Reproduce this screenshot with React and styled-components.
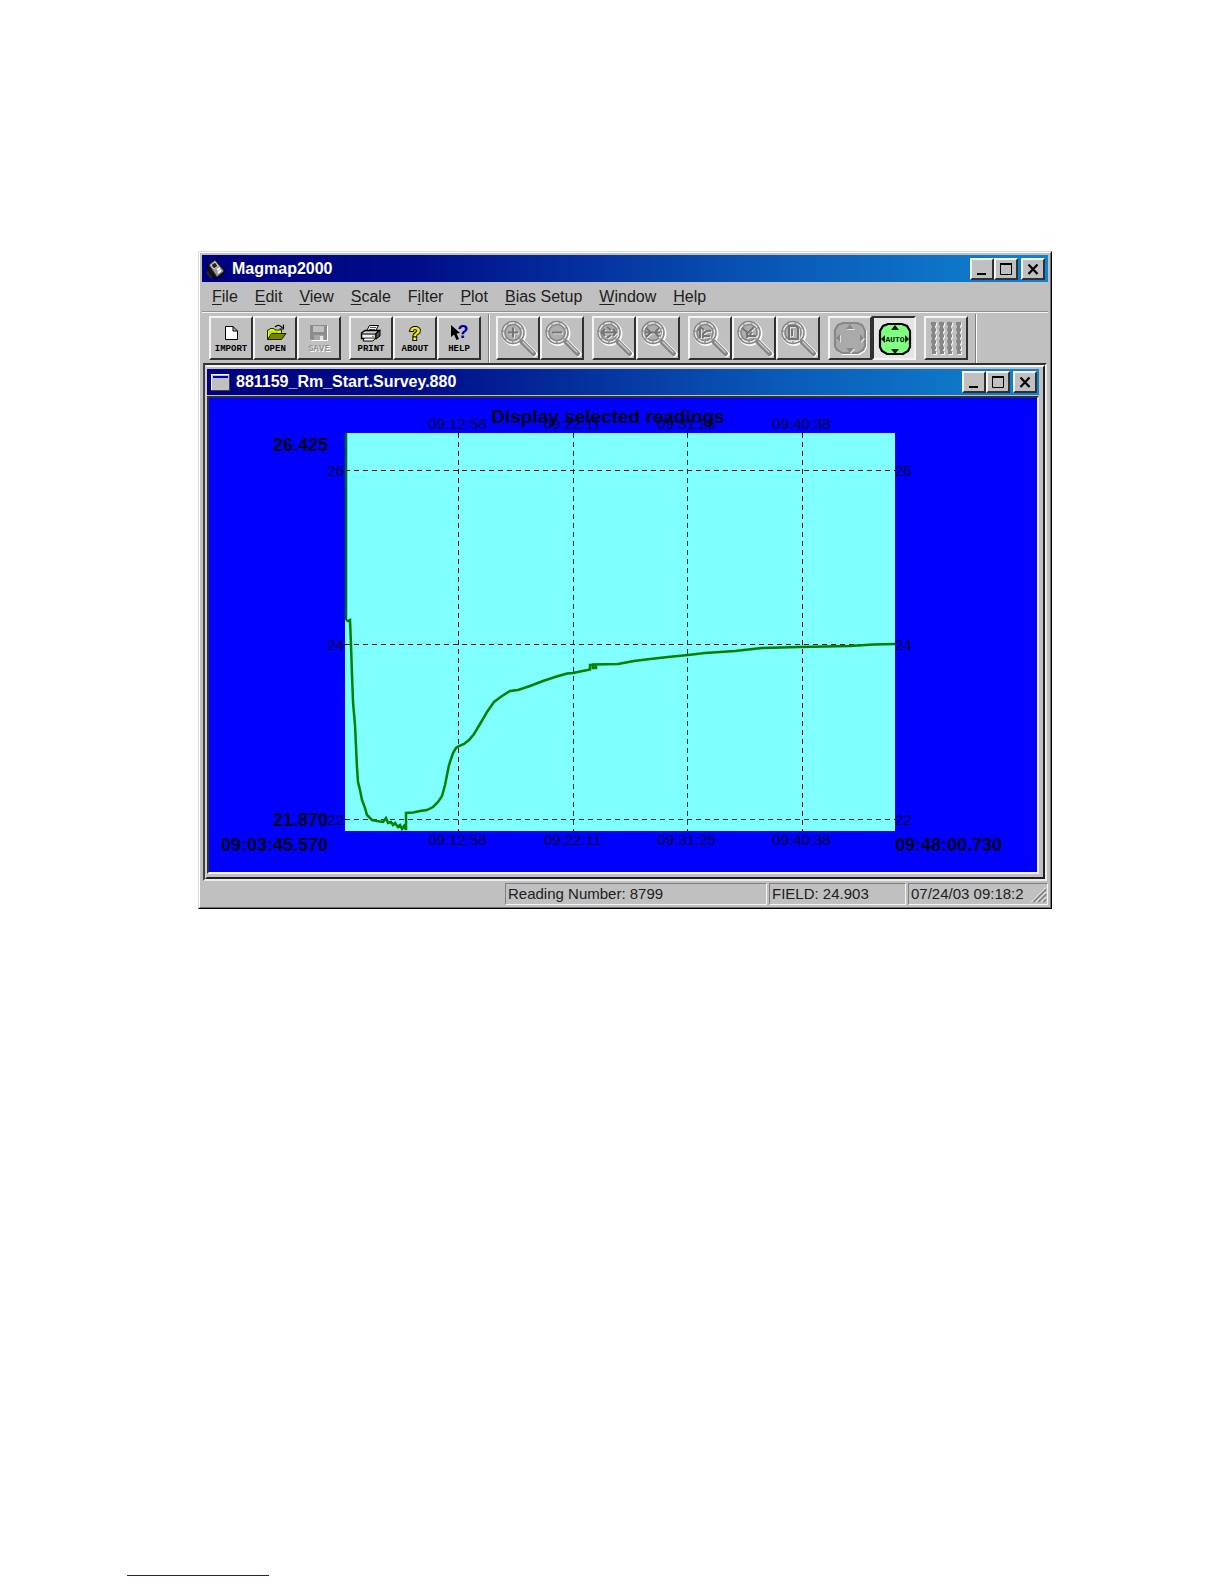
import React from "react";
import styled, { createGlobalStyle, css } from "styled-components";

const GlobalStyle = createGlobalStyle`
  *, *::before, *::after { box-sizing: border-box; }
  body {
    margin: 0;
    background: #fff;
    color: #000;
    font-family: "Liberation Sans", Arial, sans-serif;
  }
`;

const silver = "#c0c0c0";

const raised = css`
  border-style: solid;
  border-width: 2px;
  border-color: #f4f4f4 #303030 #303030 #f4f4f4;
`;

const Page = styled.main`
  display: flex;
  flex-direction: column;
  justify-content: space-between;
  min-height: 100vh;
  padding: 251px 172px 8px 198px;
`;

const Frame = styled.section`
  border: 1px solid;
  border-color: #dcdcdc #000 #000 #dcdcdc;
  background: ${silver};
`;

const FrameInner = styled.div`
  border: 1px solid;
  border-color: #fff #707070 #707070 #fff;
  padding: 2px;
`;

const TitleBar = styled.header`
  display: flex;
  align-items: center;
  gap: 6px;
  height: ${(p) => (p.$child ? 26 : 27)}px;
  padding: 0 ${(p) => (p.$child ? 2 : 3)}px 0 4px;
  background: linear-gradient(90deg, #000080 0%, #000d88 25%, #0a5cb8 70%, #1084d0 100%);
`;

const Title = styled.h1`
  flex: 1;
  margin: 0;
  color: #fff;
  font-size: 16px;
  line-height: 24px;
  font-weight: 700;
  white-space: nowrap;
`;

const Captions = styled.div`
  display: flex;
`;

const Caption = styled.button`
  ${raised}
  display: grid;
  place-items: center;
  width: 24px;
  height: 22px;
  padding: 0;
  background: ${silver};
  margin-left: ${(p) => (p.$apart ? 3 : 0)}px;
`;

const MenuBar = styled.nav`
  display: flex;
  align-items: center;
  gap: 17px;
  height: 30px;
  padding: 0 10px;
  border-bottom: 1px solid #909090;
  box-shadow: 0 1px 0 #f4f4f4;
`;

const MenuItem = styled.button`
  padding: 0;
  border: 0;
  background: none;
  color: #202020;
  font-family: inherit;
  font-size: 16px;
  line-height: 20px;
  white-space: nowrap;

  u { text-underline-offset: 2px; }
`;

const Toolbar = styled.div`
  display: flex;
  gap: 8px;
  height: 51px;
  padding: 4px 7px 3px;
`;

const ToolGroup = styled.div`
  display: flex;
`;

const Divider = styled.span`
  align-self: stretch;
  width: 2px;
  margin: -2px -2px -3px -1px;
  border-left: 1px solid #808080;
  border-right: 1px solid #fff;
`;

const Tool = styled.button`
  ${raised}
  display: flex;
  flex-direction: column;
  align-items: center;
  width: 44px;
  height: 44px;
  padding: 0;
  overflow: hidden;
  background: ${(p) => (p.$pressed ? "#e4e4e4" : silver)};
  ${(p) => p.$pressed && "border-color: #303030 #f4f4f4 #f4f4f4 #303030;"}
  color: #000;
  font-family: "Liberation Mono", monospace;
  font-size: 9px;
  line-height: 10px;
  font-weight: 700;

  &:disabled {
    color: #909090;
    text-shadow: 1px 1px 0 #fff;
  }
`;

const ToolArt = styled.svg`
  display: block;
  flex: none;
  width: 40px;
  height: ${(p) => (p.$full ? 40 : 26)}px;
`;

const Workspace = styled.div`
  margin: 0 1px;
  border: 2px solid;
  border-color: #303030 #ececec #ececec #404040;
`;

const ChildFrame = styled.section`
  border: 2px solid;
  border-color: #f4f4f4 #202020 #202020 #d0d0d0;
  padding: 2px 4px 3px 0;
  background: ${silver};
`;

const Canvas = styled.div`
  margin-top: 1px;
  border: 2px solid;
  border-color: #303030 #f0f0f0 #f0f0f0 #303030;
  background: #0000ff;
`;

const ChartSvg = styled.svg`
  display: block;
  width: 100%;
  height: auto;
`;

const Label = styled.text`
  fill: #00003c;
  font-size: 15px;
  text-anchor: ${(p) => p.$anchor || "start"};
`;

const StrongLabel = styled(Label)`
  fill: #000018;
  font-size: ${(p) => (p.$heading ? 19 : 18)}px;
  font-weight: 700;
`;

const StatusBar = styled.footer`
  display: flex;
  justify-content: flex-end;
  gap: 2px;
  padding-top: 2px;
`;

const StatusPanel = styled.div`
  display: flex;
  justify-content: space-between;
  width: ${(p) => p.$width}px;
  height: 22px;
  padding-left: 2px;
  border: 1px solid;
  border-color: #808080 #f4f4f4 #f4f4f4 #808080;
  color: #202020;
  font-size: 15px;
  line-height: 20px;
  white-space: nowrap;
`;

const Grip = styled.svg`
  width: 18px;
  height: 20px;
  background: ${silver};
`;

const FootRule = styled.hr`
  width: 142px;
  height: 1px;
  margin: 0 0 0 -71px;
  border: 0;
  background: #1c1c86;
`;

function DeviceIcon() {
  return (
    <svg width="20" height="22" viewBox="0 0 20 22" aria-hidden="true">
      <path d="M1 8 L9 1 L19 14 L11 21 L5 17 Z" fill="#141414" stroke="#000" />
      <path d="M3 7 L9 2 L18 13 L11 19 Z" fill="#9a9a9a" stroke="#333" />
      <path d="M5 7 L9 4 L12 8 L8 11 Z" fill="#222" stroke="#e0e0e0" />
      <path d="M11 12 L14 10 M12 15 L15 12" stroke="#fff" strokeWidth="2" />
      <path d="M1 14 L6 20" stroke="#222" strokeWidth="3" />
    </svg>
  );
}

function DocumentIcon() {
  return (
    <svg width="19" height="17" viewBox="0 0 19 17" aria-hidden="true">
      <path d="M0 0 H19 V17 H0 Z" fill="#404040" />
      <path d="M0 0 H18 V16 H0 Z" fill="#f4f4f4" />
      <path d="M1 1 H18 V16 H1 Z" fill="#c0c0c0" />
      <path d="M2 2 H17 V4 H2 Z" fill="#0000c8" />
    </svg>
  );
}

function WindowCaptions() {
  return (
    <Captions>
      <Caption aria-label="Minimize">
        <svg width="18" height="16"><path d="M4 12 H13 V14 H4 Z" /></svg>
      </Caption>
      <Caption aria-label="Maximize">
        <svg width="18" height="16">
          <path d="M3.500 2 V13.500 H14.500 V2" fill="none" stroke="#000" />
          <path d="M3 2 H15 V4 H3 Z" />
        </svg>
      </Caption>
      <Caption aria-label="Close" $apart>
        <svg width="18" height="16"><path d="M4.500 3.500 L13.500 13 M13.500 3.500 L4.500 13" stroke="#000" strokeWidth="2.200" /></svg>
      </Caption>
    </Captions>
  );
}

const menus = [
  ["", "F", "ile"],
  ["", "E", "dit"],
  ["", "V", "iew"],
  ["", "S", "cale"],
  ["F", "i", "lter"],
  ["", "P", "lot"],
  ["", "B", "ias Setup"],
  ["", "W", "indow"],
  ["", "H", "elp"],
];

const fileArt = {
  IMPORT: (
    <path d="M14.500 8.500 H22 L26.500 13 V21.500 H14.500 Z M22 8.500 V13 H26.500" fill="#fff" stroke="#000" />
  ),
  OPEN: (
    <>
      <path d="M12.500 21.500 V12 H14 L15 10.500 H19 L20 12 H26.500 V16" fill="#f4f400" stroke="#003800" />
      <path d="M12.500 21.500 L16.500 15.500 H31 L26.500 21.500 Z" fill="#808000" stroke="#002800" />
      <path d="M20 9 Q24 5.500 27.500 10 M28.500 6.500 V11 H24.500" fill="none" stroke="#000" strokeWidth="1.200" />
      <path d="M14 14 H23 M14 16 H16" stroke="#70d020" />
    </>
  ),
  SAVE: (
    <>
      <path d="M12 8 H29 V23 H13 L12 22 Z" fill="#fff" />
      <path d="M11 7 H28 V22 H12 L11 21 Z" fill="#8c8c8c" />
      <path d="M14 8 H25 V14 H14 Z" fill="#c0c0c0" />
      <path d="M15 17 H25 V22 H15 Z" fill="#a8a8a8" />
      <path d="M21 18 H24 V22 H21 Z" fill="#e8e8e8" />
    </>
  ),
  PRINT: (
    <>
      <path d="M15.500 13 L18.500 7.500 H27.500 L24.500 13" fill="#fff" stroke="#000" />
      <path d="M19 9.500 H25 M18 11.500 H24" stroke="#555" />
      <path d="M10.500 15 L14 12.500 H28.500 L25 15.500 V20.500 H10.500 Z" fill="#d0d0d0" stroke="#000" strokeWidth="1.400" />
      <path d="M25 15.500 L29 12.500 V18 L25 21 Z" fill="#505050" stroke="#000" />
      <path d="M11 16 H25" stroke="#000" />
      <path d="M12 18 H23" stroke="#fff" strokeWidth="1.500" />
      <path d="M13 20.500 L12 23 H22 L24 20.500" fill="#fff" stroke="#000" />
      <path d="M21 18.500 H23" stroke="#a0a000" strokeWidth="1.500" />
    </>
  ),
  ABOUT: (
    <text x="20" y="22" textAnchor="middle" fontFamily="Liberation Sans, sans-serif" fontSize="19" fill="#f0f000" stroke="#000" strokeWidth="2" paintOrder="stroke">?</text>
  ),
  HELP: (
    <>
      <path d="M12 7 V19 L15 16.500 L17.500 22 L20 21 L17.500 15.500 L21 15 Z" fill="#000" />
      <text x="24" y="20" textAnchor="middle" fontFamily="Liberation Sans, sans-serif" fontSize="18" fill="#000098">?</text>
    </>
  ),
};

function LabelledTool({ name, disabled }) {
  return (
    <Tool disabled={disabled}>
      <ToolArt viewBox="0 0 40 26" aria-hidden="true">{fileArt[name]}</ToolArt>
      {name}
    </Tool>
  );
}

const lensMarks = {
  "Zoom in": "M10 14.500 H20 M15 9.500 V19.500",
  "Zoom out": "M10 14.500 H20",
  "Expand time": "M8 14.500 H22 M11 11 L8 14.500 L11 18 M13 9 L17 12 M13 20 L17 17 M19 11 L22 14.500 L19 18",
  "Shrink time": "M7 14.500 H22 M8 10 L13 14.500 L8 19 M21 10 L17 14.500 L21 19",
  "Expand both": "M10 20 V10 M7.500 13 L11 9.500 L14 12 M13 20 V16 Q16 12 21 13 M14 18 H20",
  "Shrink both": "M8 10 L14 15 L20 9 M13 14 V20 M14 18 H22 M18 14 L15 18",
  "Whole page": "M11 8 H18 L20 10 V21 H11 Z M14 11 V18",
};

function LensTool({ name }) {
  const mark = lensMarks[name];
  return (
    <Tool disabled aria-label={name}>
      <ToolArt $full viewBox="0 0 40 40" aria-hidden="true">
        <g fill="none">
          <circle cx="16" cy="15.500" r="11.500" stroke="#fafafa" strokeWidth="2" />
          <circle cx="15" cy="14.500" r="11" fill="#aeaeae" stroke="#868686" strokeWidth="1.500" />
          <circle cx="15" cy="14.500" r="9.500" stroke="#e8e8e8" strokeWidth="1.500" strokeDasharray="6 2" />
          <circle cx="15" cy="14.500" r="8" stroke="#888" strokeWidth="1.500" />
          <path d="M25 24.500 L36.500 36" stroke="#fff" strokeWidth="6" strokeLinecap="round" />
          <path d="M24 24 L35.500 35.500" stroke="#868686" strokeWidth="5" strokeLinecap="round" />
          <path d="M24.500 23.500 L35.500 34.500" stroke="#c8c8c8" strokeWidth="1.500" />
          <path d={mark} stroke="#f0f0f0" strokeWidth="1.500" transform="translate(1 1)" />
          <path d={mark} stroke="#747474" strokeWidth="2" />
        </g>
      </ToolArt>
    </Tool>
  );
}

const octagon = "M14 6 H28 L33 8 L36 13 V29 L34 33 L29 36 H13 L8 33 L6 29 V13 L9 8 Z";
const arrows = "M17 12 L21 7 L25 12 Z M17 31 H25 L21 36 Z M11 17 V25 L7 21 Z M31 17 V25 L35 21 Z";

function ScaleTool({ auto }) {
  return (
    <Tool $pressed={auto} disabled={!auto} aria-label={auto ? "Auto scale" : "Manual scale"}>
      <ToolArt $full viewBox={auto ? "0 0 40 40" : "1 1 40 40"} aria-hidden="true">
        {!auto && <path d={octagon} fill="none" stroke="#fff" strokeWidth="2" transform="translate(1 1)" />}
        <path d={octagon} fill={auto ? "#80ff80" : "#aaa"} stroke={auto ? "#000" : "#888"} strokeWidth="2.200" />
        {!auto && <path d={arrows} fill="#e4e4e4" transform="translate(1 1)" />}
        <path d={arrows} fill={auto ? "#002000" : "#888"} />
        {auto && <text x="21" y="24" textAnchor="middle" fontSize="8" fill="#002000">AUTO</text>}
      </ToolArt>
    </Tool>
  );
}

function TracesTool() {
  const trace = "M0 0 H5 V3 L4 4 V5 L5 7 V9 L4 10 V11 L5 13 V15 L4 16 V17 L5 19 V21 L4 22 V23 L5 25 V27 L4 28 V29 H5 V32 H1 V28 L0 26 V25 L1 23 V22 L0 20 V19 L1 17 V16 L0 14 V13 L1 11 V10 L0 8 V7 L1 5 V4 L0 3 Z";
  return (
    <Tool disabled aria-label="Traces">
      <ToolArt $full viewBox="0 0 40 40" aria-hidden="true">
        {[5, 13, 21, 30].map((x) => (
          <g key={x} transform={`translate(${x} 4)`}>
            <path d={trace} fill="#f4f4f4" transform="translate(1 1)" />
            <path d={trace} fill="#868686" />
          </g>
        ))}
      </ToolArt>
    </Tool>
  );
}

const times = [
  { x: 249.5, label: "09:12:58" },
  { x: 364.5, label: "09:22:11" },
  { x: 478.5, label: "09:31:25" },
  { x: 593.5, label: "09:40:38" },
];

const levels = [
  { y: 72.5, label: "26" },
  { y: 246.5, label: "24" },
  { y: 421.5, label: "22" },
];

const readings = [
  [137, 222], [139, 223], [141, 222], [142, 247], [143, 277], [144, 304], [146, 327],
  [147, 348], [148, 370], [149, 384], [151, 392], [153, 402], [156, 410], [158, 417],
  [163, 422], [168, 423], [174, 424], [177, 420], [179, 425], [182, 424], [184, 427],
  [186, 425], [189, 429], [191, 427], [193, 431], [195, 428], [197, 432], [197, 415],
  [204, 414.5], [211, 413], [218, 412],
  [224, 409], [229, 404], [233, 398], [236, 387], [238, 377], [240, 367], [244, 355],
  [247, 350], [250, 348], [255, 346], [260, 342], [265, 336], [271, 326], [278, 314],
  [285, 304], [293, 298], [301, 293], [309, 292], [321, 288], [334, 283], [346, 279],
  [358, 275.5], [364, 275], [381, 271.5], [381, 267], [387, 267], [387, 270], [384, 270],
  [384, 266.5], [409, 266], [425, 263], [441, 261], [459, 259], [479, 257], [496, 255],
  [526, 253], [553, 250], [591, 249], [641, 248], [664, 246.5], [686, 246],
];

function Chart() {
  return (
    <ChartSvg viewBox="0 0 828 474" role="img" aria-label="Display selected readings">
      <rect x="136" y="35" width="550" height="398" fill="#80ffff" />
      <g stroke="#001830" strokeDasharray="5 4">
        {times.map((t) => <path key={t.x} d={`M${t.x} 35 V433`} />)}
        {levels.map((l) => <path key={l.y} d={`M136 ${l.y} H686`} />)}
      </g>
      <path d="M137 35 V222" stroke="#006428" strokeWidth="2.500" />
      <polyline points={readings.map((r) => r.join(",")).join(" ")} fill="none" stroke="#008000" strokeWidth="2.500" />
      {times.map((t) => (
        <React.Fragment key={t.label}>
          <Label x={t.x - 1} y="31" $anchor="middle">{t.label}</Label>
          <Label x={t.x - 1} y="447" $anchor="middle">{t.label}</Label>
        </React.Fragment>
      ))}
      {levels.map((l) => (
        <React.Fragment key={l.label}>
          <Label x="135" y={l.y + 5} $anchor="end">{l.label}</Label>
          <Label x="686" y={l.y + 5}>{l.label}</Label>
        </React.Fragment>
      ))}
      <StrongLabel x="399" y="25" $anchor="middle" $heading>Display selected readings</StrongLabel>
      <StrongLabel x="119" y="53" $anchor="end">26.425</StrongLabel>
      <StrongLabel x="119" y="428" $anchor="end">21.870</StrongLabel>
      <StrongLabel x="119" y="453" $anchor="end">09:03:45.570</StrongLabel>
      <StrongLabel x="686" y="453">09:48:00.730</StrongLabel>
    </ChartSvg>
  );
}

export default function App() {
  return (
    <>
      <GlobalStyle />
      <Page>
        <Frame>
          <FrameInner>
            <TitleBar>
              <DeviceIcon />
              <Title>Magmap2000</Title>
              <WindowCaptions />
            </TitleBar>
            <MenuBar>
              {menus.map(([before, key, after]) => (
                <MenuItem key={before + key + after}>{before}<u>{key}</u>{after}</MenuItem>
              ))}
            </MenuBar>
            <Toolbar>
              <ToolGroup>
                <LabelledTool name="IMPORT" />
                <LabelledTool name="OPEN" />
                <LabelledTool name="SAVE" disabled />
              </ToolGroup>
              <ToolGroup>
                <LabelledTool name="PRINT" />
                <LabelledTool name="ABOUT" />
                <LabelledTool name="HELP" />
              </ToolGroup>
              <Divider />
              <ToolGroup>
                <LensTool name="Zoom in" />
                <LensTool name="Zoom out" />
              </ToolGroup>
              <ToolGroup>
                <LensTool name="Expand time" />
                <LensTool name="Shrink time" />
              </ToolGroup>
              <ToolGroup>
                <LensTool name="Expand both" />
                <LensTool name="Shrink both" />
                <LensTool name="Whole page" />
              </ToolGroup>
              <ToolGroup>
                <ScaleTool />
                <ScaleTool auto />
              </ToolGroup>
              <ToolGroup>
                <TracesTool />
              </ToolGroup>
              <Divider />
            </Toolbar>
            <Workspace>
              <ChildFrame>
                <TitleBar $child>
                  <DocumentIcon />
                  <Title as="h2">881159_Rm_Start.Survey.880</Title>
                  <WindowCaptions />
                </TitleBar>
                <Canvas>
                  <Chart />
                </Canvas>
              </ChildFrame>
            </Workspace>
            <StatusBar>
              <StatusPanel $width={262}>Reading Number: 8799</StatusPanel>
              <StatusPanel $width={137}>FIELD: 24.903</StatusPanel>
              <StatusPanel $width={140}>
                07/24/03 09:18:2
                <Grip viewBox="0 0 18 20" aria-hidden="true">
                  <path d="M4 18 L17 5 M9 18 L17 10 M14 18 L17 15" stroke="#808080" strokeWidth="2" />
                  <path d="M2.500 18 L17 3.500 M7.500 18 L17 8.500 M12.500 18 L17 13.500" stroke="#fff" />
                </Grip>
              </StatusPanel>
            </StatusBar>
          </FrameInner>
        </Frame>
        <FootRule />
      </Page>
    </>
  );
}
